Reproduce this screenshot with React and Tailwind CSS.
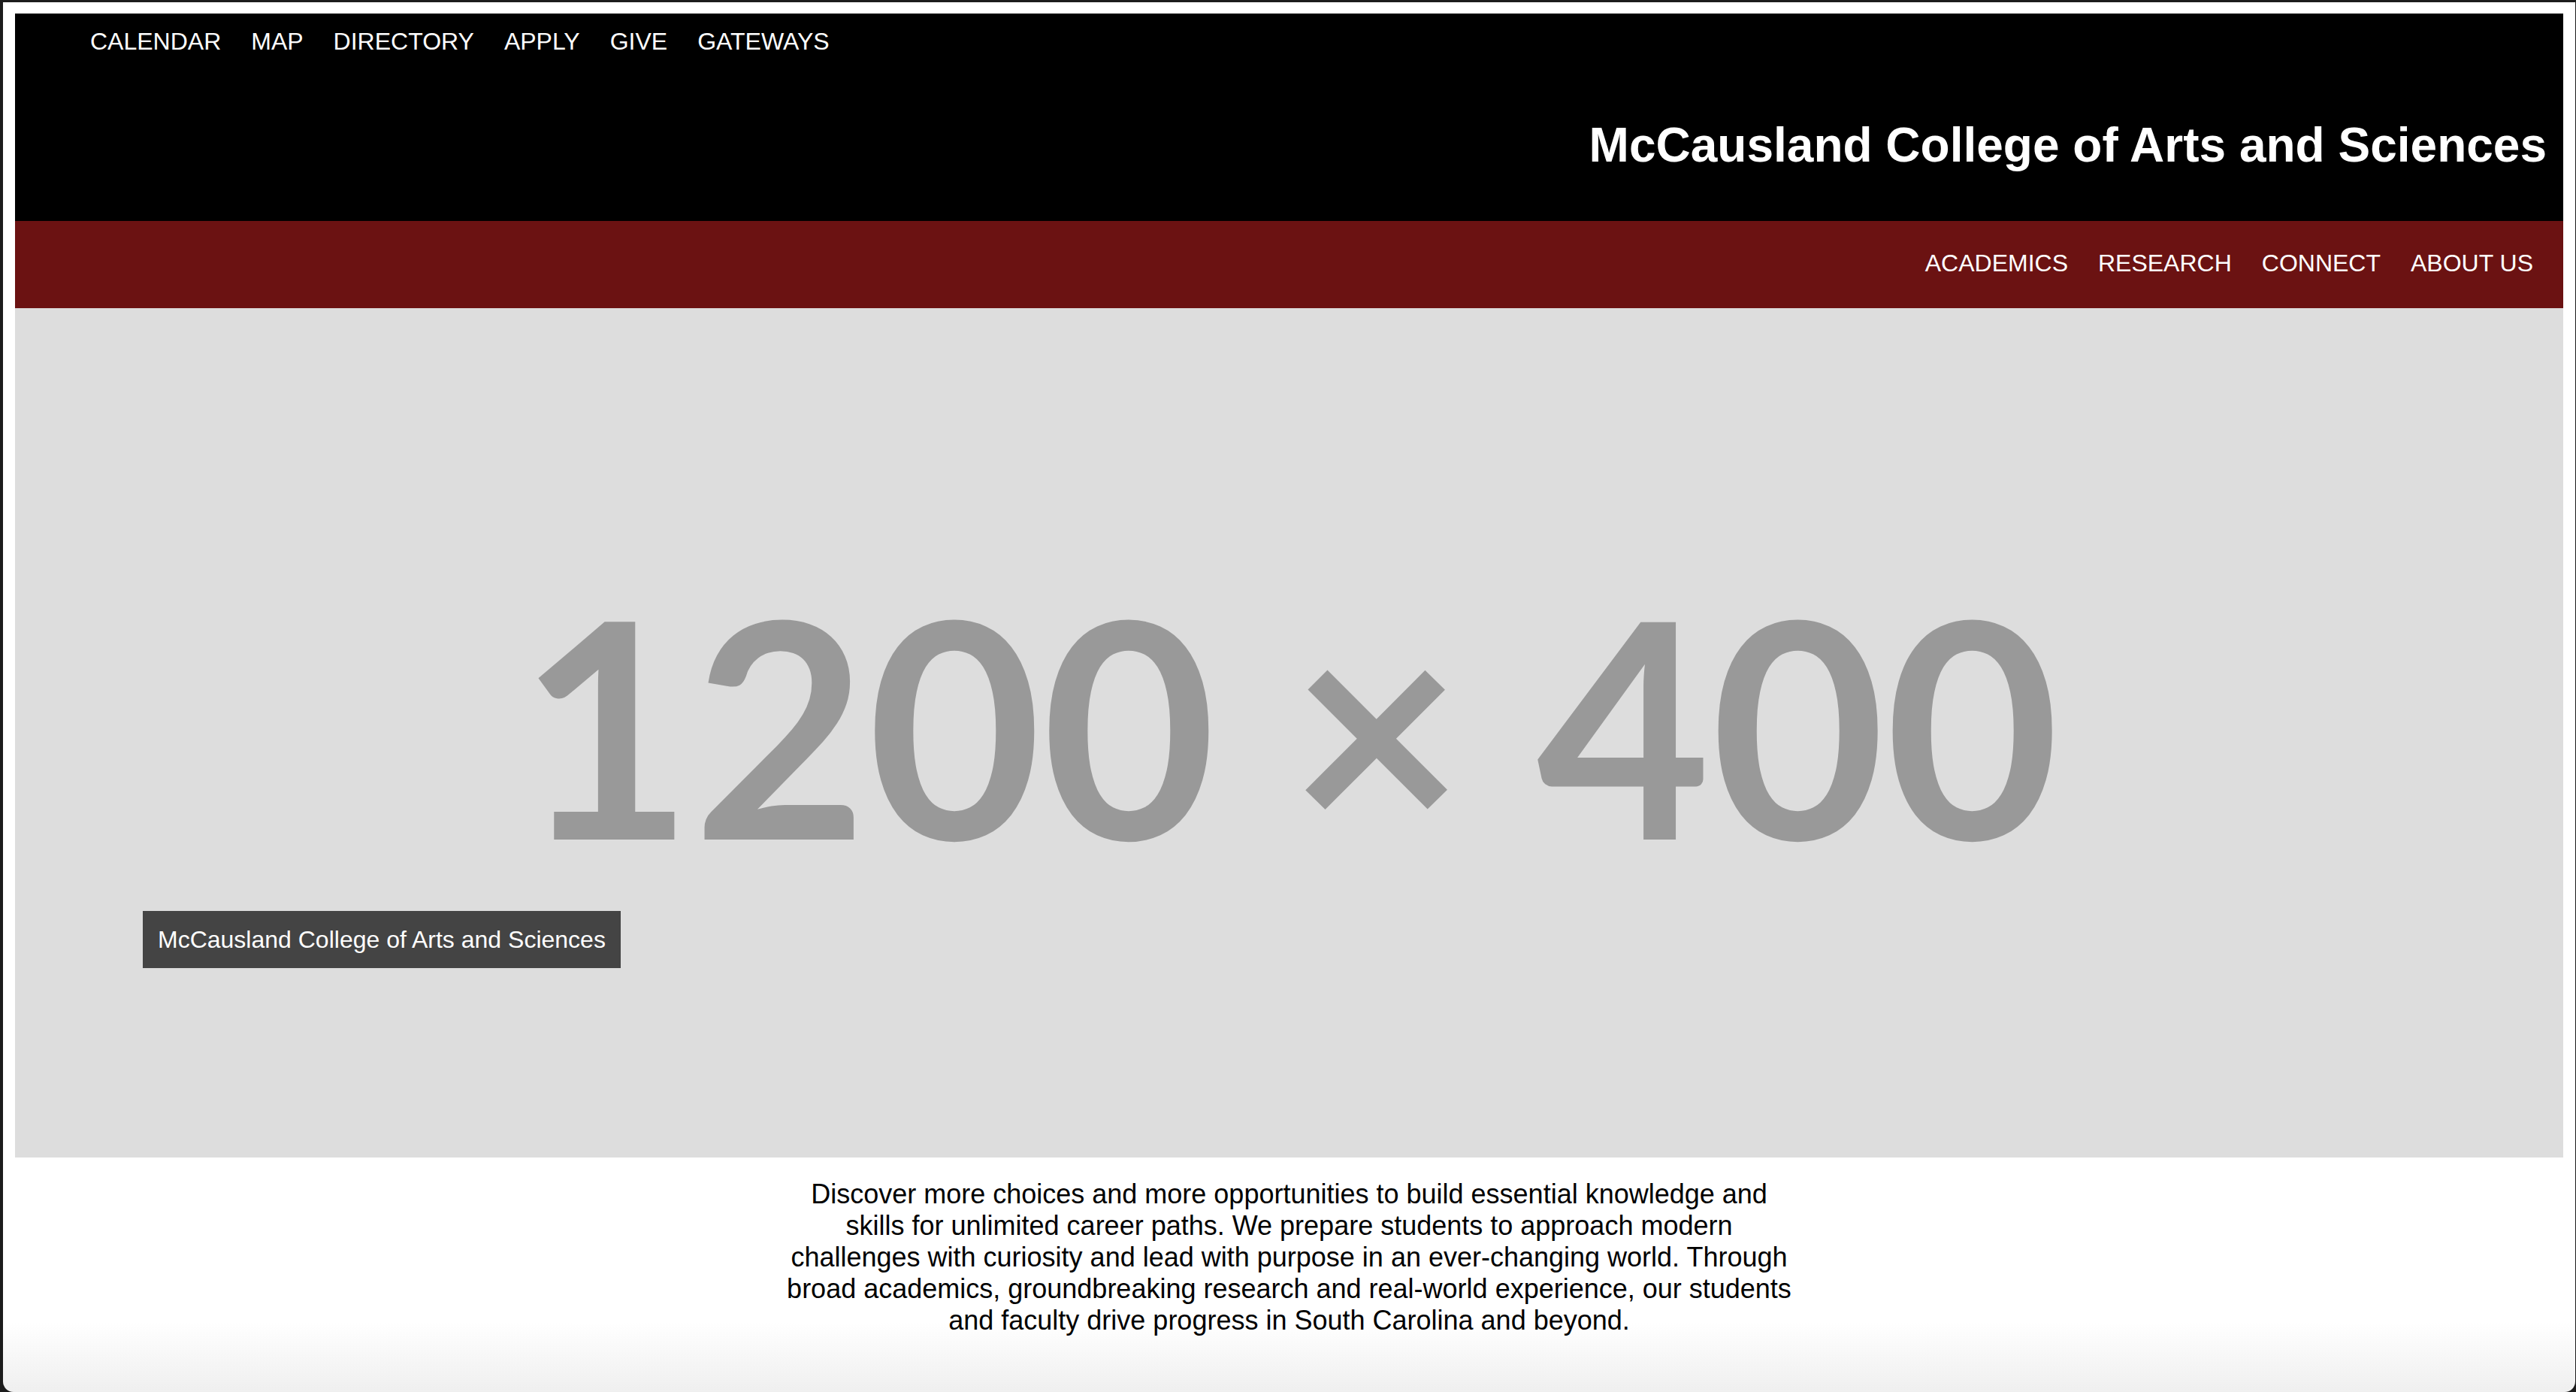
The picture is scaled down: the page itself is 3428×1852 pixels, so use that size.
import React from 'react';

const TOP_LINKS = ['CALENDAR', 'MAP', 'DIRECTORY', 'APPLY', 'GIVE', 'GATEWAYS'];
const MAIN_LINKS = ['ACADEMICS', 'RESEARCH', 'CONNECT', 'ABOUT US'];

const SANS = "font-['Liberation_Sans',Arial,sans-serif]";

function Header() {
  return (
    <header className="bg-black text-white">
      {/* utility links */}
      <ul className="flex h-[74px] items-center pl-[80px] text-[32px] leading-[37px]">
        {TOP_LINKS.map((link) => (
          <li key={link} className="px-[20px]">
            <a href="#">{link}</a>
          </li>
        ))}
      </ul>
      <div className="flex h-[202px] items-center justify-end pr-[22px]">
        <h1 className="text-[64px] font-bold leading-[74px]">
          McCausland College of Arts and Sciences
        </h1>
      </div>
    </header>
  );
}

function MainNav() {
  return (
    <nav className="flex h-[116px] items-center justify-end bg-[#6b1212] pb-[3px] pr-[20px] text-white">
      <ul className="flex text-[32px] leading-[37px]">
        {MAIN_LINKS.map((link) => (
          <li key={link} className="px-[20px]">
            <a href="#">{link}</a>
          </li>
        ))}
      </ul>
    </nav>
  );
}

function Hero() {
  return (
    <section className="relative flex h-[1130px] items-center justify-center bg-[#dddddd] pb-[26px]">
      <span className="font-['Lato',sans-serif] text-[400px] font-bold leading-none text-[#999999]">
        1200 × 400
      </span>
      <div className="absolute left-[170px] top-[802px] bg-[#444444] px-[20px] py-[19px] text-[32px] leading-[38px] text-white">
        McCausland College of Arts and Sciences
      </div>
    </section>
  );
}

export default function App() {
  return (
    <div className={`h-[1852px] w-[3428px] overflow-hidden bg-[#1c1c1c] pl-[4px] pr-px pt-[3px] ${SANS}`}>
      <div className="h-full rounded-b-[14px] bg-linear-to-b from-white from-[95%] to-[#efefef] px-[16px] pt-[15px]">
        <Header />
        <MainNav />
        <Hero />
        <p className="mx-auto mt-[28px] max-w-[1350px] text-center text-[36px] leading-[42px] text-black">
          Discover more choices and more opportunities to build essential knowledge and
          skills for unlimited career paths. We prepare students to approach modern
          challenges with curiosity and lead with purpose in an ever-changing world. Through
          broad academics, groundbreaking research and real-world experience, our students
          and faculty drive progress in South Carolina and beyond.
        </p>
      </div>
    </div>
  );
}
